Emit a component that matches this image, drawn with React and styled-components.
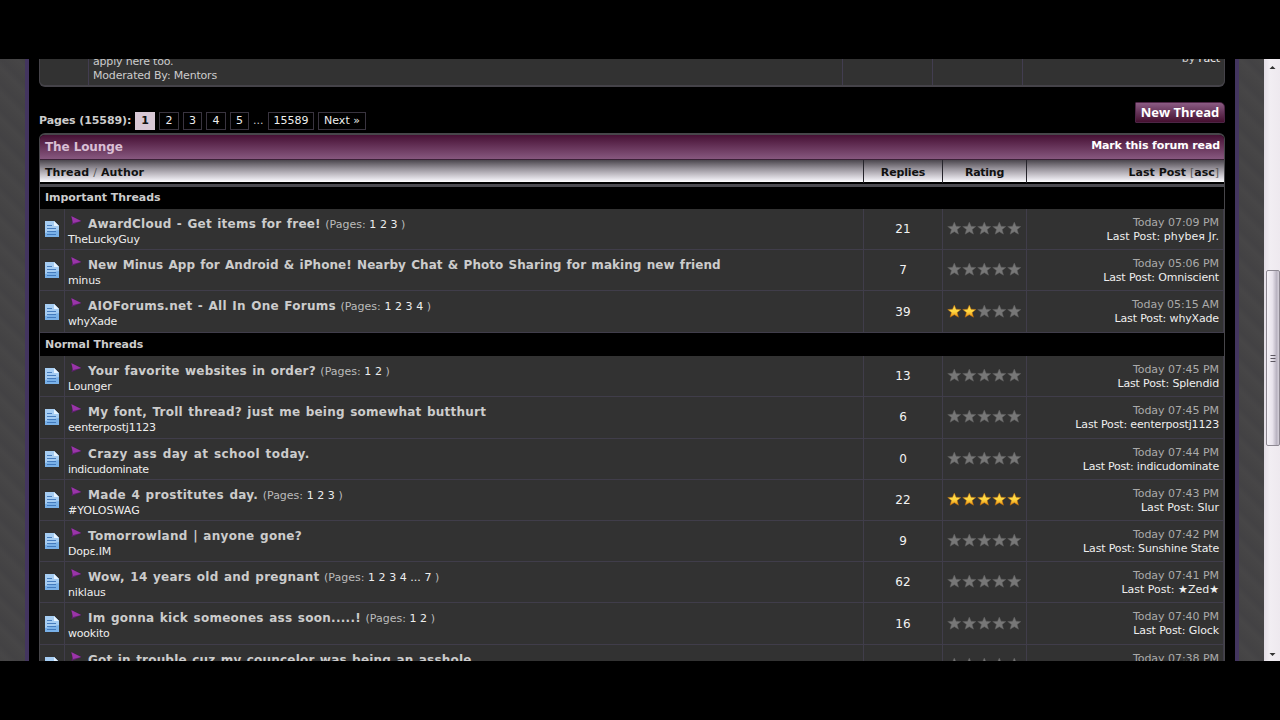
import React from 'react';
import styled, { createGlobalStyle } from 'styled-components';

const GlobalStyle = createGlobalStyle`
  * { box-sizing: border-box; }
  body { margin: 0; background: #000; font: 11px/14px "DejaVu Sans", Verdana, sans-serif; color: #ccc; overflow: hidden; }
`;

const Screen = styled.div`
  width: 1280px;
  height: 720px;
  padding: 59px 0;
  background: #000;
`;
const Viewport = styled.div`
  height: 602px;
  display: flex;
  overflow: hidden;
  background: repeating-linear-gradient(45deg, #454445 0, #474647 6px, #434244 12px, #454445 18px);
`;
const Page = styled.main`
  width: 1214px;
  height: 602px;
  margin-left: 25px;
  padding: 0 10px 0 11px;
  border: solid #43355f;
  border-width: 0 4px;
  background: #000;
  overflow: hidden;
`;
const Columns = styled.div`
  display: grid;
  grid-template-columns: ${p => p.$cols};
`;
const PreviousForum = styled(Columns)`
  height: 28px;
  width: 1186px;
  margin-left: -1px;
  background: #323232;
  border: solid #454349;
  border-width: 0 1px 2px;
  border-radius: 0 0 6px 6px;
  overflow: hidden;
`;
const ForumCell = styled.div`
  height: 28px;
  padding: 0 4px;
  border-left: ${p => (p.$first ? 0 : 1)}px solid #423d50;
  text-align: ${p => (p.$right ? 'right' : 'left')};
  white-space: nowrap;
`;
const ForumText = styled.div`
  margin-top: ${p => p.$top}px;
  letter-spacing: -0.18px;
  em { font-style: normal; color: #eee; }
`;
const Toolbar = styled.div`
  height: 46px;
  display: flex;
  justify-content: space-between;
  align-items: flex-start;
  padding-top: 14px;
`;
const Pagination = styled.nav`
  display: flex;
  align-items: center;
  gap: 4px;
  margin: 11px 0 0 -1px;
  height: 18px;
`;
const PageLabel = styled.b`
  width: 92px;
  letter-spacing: -0.1px;
  white-space: nowrap;
`;
const PageLink = styled.span`
  width: ${p => p.$w}px;
  height: 18px;
  line-height: 16px;
  text-align: center;
  white-space: nowrap;
  border: 1px solid ${p => (p.$current ? '#d8c8d5' : '#39343f')};
  background: ${p => (p.$current ? '#d8c8d5' : '#000')};
  color: ${p => (p.$current ? '#111' : '#eee')};
  font-weight: ${p => (p.$current ? 700 : 400)};
`;
const Dots = styled.span`
  width: 11px;
  color: #ccc;
`;
const NewThread = styled.button`
  width: 90px;
  height: 21px;
  margin: 1px 0 0 0;
  padding: 0;
  border: 1px solid #4d2546;
  border-radius: 1px 5px 1px 1px;
  background: linear-gradient(#8b5b83, #69385d 45%, #45102f);
  color: #fff;
  font: 700 13px/19px "Open Sans", "Noto Sans", sans-serif;
  white-space: nowrap;
`;
const Board = styled.section`
  width: 1186px;
  margin-left: -1px;
  border: solid #47464a;
  border-width: 2px 1px 0;
  border-radius: 6px 6px 0 0;
  overflow: hidden;
`;
const BoardTitle = styled.header`
  height: 25px;
  padding: 0 4px 0 5px;
  display: flex;
  justify-content: space-between;
  align-items: center;
  background: linear-gradient(#461034, #87587f);
  border-bottom: 1px solid #3b2137;
  font-weight: 700;
  color: #fff;
`;
const BoardName = styled.span`
  font-size: 12px;
  letter-spacing: -0.1px;
  color: #d9bfd5;
`;
const MarkRead = styled.span`
  padding-bottom: 2px;
  letter-spacing: -0.12px;
`;
const HeadRow = styled(Columns)`
  height: 27px;
  padding: 0 1px;
  background: linear-gradient(#4b464d, #98939b 40%, #e8e6ec 88%, #fff) 0 0 / 100% 22px no-repeat, #000;
  border-bottom: 3px solid #4b4a50;
  color: #111;
  font-weight: 700;
  line-height: 25px;
`;
const HeadCell = styled.div`
  height: 23px;
  padding: 0 4px;
  border-left: ${p => (p.$first ? 0 : 1)}px solid #26242b;
  text-align: ${p => p.$align || 'left'};
  letter-spacing: ${p => p.$ls || 0}px;
  i { font-style: normal; color: #555; font-weight: 400; }
`;
const Section = styled.h2`
  height: ${p => p.$h}px;
  margin: 0;
  padding-left: 5px;
  background: #000;
  color: #ccc;
  font-size: 11px;
  line-height: ${p => p.$h}px;
  letter-spacing: -0.03px;
`;
const ThreadRow = styled(Columns)`
  height: 41.22px;
  background: #323232;
`;
const Cell = styled.div`
  min-width: 0;
  padding: 0 ${p => (p.$tight ? 3 : 4)}px;
  border: solid #403d4a;
  border-width: 0 1px 1px 0;
  white-space: nowrap;
`;
const CenterCell = styled(Cell)`
  display: flex;
  align-items: center;
  justify-content: center;
  color: #f2f2f2;
  font-size: 12px;
`;
const TitleLine = styled.div`
  display: flex;
  height: 23px;
  line-height: 31px;
`;
const Flag = styled.svg`
  width: 20px;
  height: 20px;
  flex: none;
`;
const Title = styled.b`
  font-size: 12px;
  letter-spacing: ${p => p.$ls}px;
  word-spacing: 1px;
  color: #ccc;
`;
const Pages = styled.span`
  margin-left: 4.5px;
  font-size: 11px;
  word-spacing: 0.1px;
  color: #bbb;
  em { font-style: normal; color: #eee; }
`;
const Author = styled.div`
  height: 16px;
  line-height: 16px;
  color: #eee;
  letter-spacing: ${p => p.$ls || -0.2}px;
`;
const LastCell = styled(Cell)`
  padding-top: 7px;
  text-align: right;
  color: #aaa;
`;
const Poster = styled.div`
  color: #eee;
  letter-spacing: ${p => p.$ls || -0.15}px;
`;
const When = styled.div`
  letter-spacing: -0.04px;
`;
const Stars = styled.svg`
  width: 75px;
  height: 15px;
  display: block;
  margin-top: -1px;
`;
const Scrollbar = styled.aside`
  width: 16px;
  height: 602px;
  margin-left: auto;
  display: flex;
  flex-direction: column;
  align-items: center;
  background: linear-gradient(90deg, #e4dfe7, #f2eef3 35%, #eee9ef);
`;
const Arrow = styled.svg`
  width: 16px;
  height: 16px;
  flex: none;
`;
const Thumb = styled.div`
  width: 14px;
  height: 176px;
  margin: 195px 0 auto 1px;
  border: 1px solid #8d8892;
  border-radius: 2px;
  background: linear-gradient(90deg, #f5f2f7, #e8e3ec 45%, #b9b3c1 80%, #d5d0da);
  display: flex;
  align-items: center;
  justify-content: center;
`;

function DocIcon() {
  return (
    <svg width="16" height="18" viewBox="0 0 16 18">
      <path d="M1 1h9l5 5v11H1z" fill="#79b1e8" />
      <path d="M1 1h9l5 5v4L1 13z" fill="#a5cdf3" />
      <path d="M10 1l5 5h-5z" fill="#e6f3ff" />
      <path d="M3 5.500h5M3 8.500h9M3 11.500h9M3 14.500h9" stroke="#3c74b8" strokeWidth="0.9" />
    </svg>
  );
}

function Rating({ value }) {
  return (
    <Stars viewBox="0 0 75 15">
      <defs>
        <linearGradient id="gold" x1="0" y1="0" x2="0" y2="1">
          <stop offset="0" stopColor="#ffd94a" />
          <stop offset="0.55" stopColor="#ffd640" />
          <stop offset="1" stopColor="#e88a10" />
        </linearGradient>
      </defs>
      {[0, 1, 2, 3, 4].map(i => (
        <path
          key={i}
          transform={`translate(${i * 15 + 7.3} 7.5)`}
          d="M0-6.5L1.8-2.3L6.6-2L2.9 1L4.2 5.7L0 3.2L-4.2 5.7L-2.9 1L-6.6-2L-1.8-2.3Z"
          fill={i < value ? 'url(#gold)' : '#777'}
          stroke={i < value ? '#b5690c' : '#5c5c5c'}
          strokeWidth="0.5"
        />
      ))}
    </Stars>
  );
}

const cols = '25px 799px 79px 84px 197px';

function Thread({ t }) {
  return (
    <ThreadRow $cols={cols}>
      <CenterCell><DocIcon /></CenterCell>
      <Cell $tight>
        <TitleLine>
          <Flag viewBox="0 0 20 20">
            <path d="M3 7L13.500 12L3.500 16L4.500 12z" fill="#5f2070" />
            <path d="M3.500 7.300L13 12L5 14z" fill="#9a35a8" />
          </Flag>
          <Title $ls={t.ls}>{t.title}</Title>
          {t.pages && <Pages>(Pages: <em>{t.pages}</em> )</Pages>}
        </TitleLine>
        <Author $ls={t.authorLs}>{t.author}</Author>
      </Cell>
      <CenterCell>{t.replies}</CenterCell>
      <CenterCell><Rating value={t.rating || 0} /></CenterCell>
      <LastCell>
        <When>Today {t.time}</When>
        {t.last && <Poster $ls={t.lastLs}>Last Post: {t.last}</Poster>}
      </LastCell>
    </ThreadRow>
  );
}

const important = [
  { title: 'AwardCloud - Get items for free!', ls: 0.22, pages: '1 2 3', author: 'TheLuckyGuy', replies: 21, time: '07:09 PM', last: 'phybeя Jr.', lastLs: 0.06 },
  { title: 'New Minus App for Android & iPhone! Nearby Chat & Photo Sharing for making new friend', ls: 0.05, author: 'minus', replies: 7, time: '05:06 PM', last: 'Omniscient' },
  { title: 'AIOForums.net - All In One Forums', ls: 0.26, pages: '1 2 3 4', author: 'whyXade', replies: 39, rating: 2, time: '05:15 AM', last: 'whyXade' },
];
const normal = [
  { title: 'Your favorite websites in order?', ls: 0.22, pages: '1 2', author: 'Lounger', replies: 13, time: '07:45 PM', last: 'Splendid' },
  { title: 'My font, Troll thread? just me being somewhat butthurt', ls: 0.23, author: 'eenterpostj1123', replies: 6, time: '07:45 PM', last: 'eenterpostj1123' },
  { title: 'Crazy ass day at school today.', ls: 0.43, author: 'indicudominate', authorLs: -0.33, replies: 0, time: '07:44 PM', last: 'indicudominate', lastLs: -0.23 },
  { title: 'Made 4 prostitutes day.', ls: 0.3, pages: '1 2 3', author: '#YOLOSWAG', authorLs: 0.02, replies: 22, rating: 5, time: '07:43 PM', last: 'Slur', lastLs: -0.01 },
  { title: 'Tomorrowland | anyone gone?', ls: 0.3, author: 'Dopε.IM', replies: 9, time: '07:42 PM', last: 'Sunshine State' },
  { title: 'Wow, 14 years old and pregnant', ls: 0.25, pages: '1 2 3 4 ... 7', author: 'niklaus', replies: 62, time: '07:41 PM', last: '★Zed★', lastLs: -0.01 },
  { title: 'Im gonna kick someones ass soon.....!', ls: 0.27, pages: '1 2', author: 'wookito', replies: 16, time: '07:40 PM', last: 'Glock', lastLs: -0.1 },
  { title: 'Got in trouble cuz my councelor was being an asshole', ls: 0.19, time: '07:38 PM' },
];

export default function App() {
  return (
    <>
      <GlobalStyle />
      <Screen>
        <Viewport>
          <Page>
            <PreviousForum $cols="48px 754px 90px 90px 1fr">
              <ForumCell $first />
              <ForumCell>
                <ForumText $top={-4}>apply here too.</ForumText>
                <ForumText $top={0}>Moderated By: Mentors</ForumText>
              </ForumCell>
              <ForumCell />
              <ForumCell />
              <ForumCell $right><ForumText $top={-7}>by <em>Fact</em></ForumText></ForumCell>
            </PreviousForum>
            <Toolbar>
              <Pagination>
                <PageLabel>Pages (15589):</PageLabel>
                <PageLink $w={20} $current>1</PageLink>
                <PageLink $w={20}>2</PageLink>
                <PageLink $w={19}>3</PageLink>
                <PageLink $w={20}>4</PageLink>
                <PageLink $w={19}>5</PageLink>
                <Dots>...</Dots>
                <PageLink $w={46}>15589</PageLink>
                <PageLink $w={48}>Next »</PageLink>
              </Pagination>
              <NewThread>New Thread</NewThread>
            </Toolbar>
            <Board>
              <BoardTitle>
                <BoardName>The Lounge</BoardName>
                <MarkRead>Mark this forum read</MarkRead>
              </BoardTitle>
              <HeadRow $cols="822px 79px 84px 1fr">
                <HeadCell $first $ls={0.12}>Thread <i>/</i> Author</HeadCell>
                <HeadCell $align="center" $ls={-0.15}>Replies</HeadCell>
                <HeadCell $align="center" $ls={-0.25}>Rating</HeadCell>
                <HeadCell $align="right">Last Post <i>[</i>asc<i>]</i></HeadCell>
              </HeadRow>
              <Section $h={22}>Important Threads</Section>
              {important.map(t => <Thread key={t.title} t={t} />)}
              <Section $h={23.5}>Normal Threads</Section>
              {normal.map(t => <Thread key={t.title} t={t} />)}
            </Board>
          </Page>
          <Scrollbar>
            <Arrow viewBox="0 0 16 16"><path d="M5.500 10L8.500 7L11.500 10z" fill="#333" /></Arrow>
            <Thumb>
              <svg width="8" height="9" viewBox="0 0 8 9"><path d="M1.500 1.500H6.500M1.500 4.500H6.500M1.500 7.500H6.500" stroke="#5c5761" /></svg>
            </Thumb>
            <Arrow viewBox="0 0 16 16"><path d="M5.500 8L8.500 11L11.500 8z" fill="#333" /></Arrow>
          </Scrollbar>
        </Viewport>
      </Screen>
    </>
  );
}
